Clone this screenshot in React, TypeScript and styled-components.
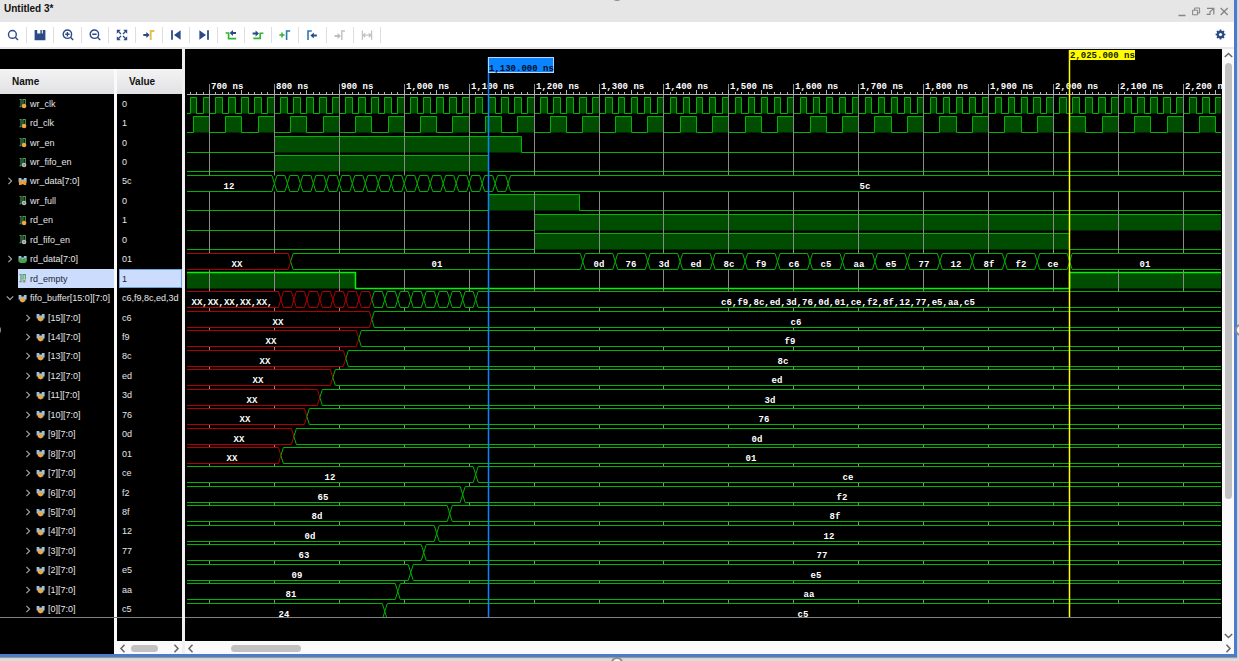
import React, { useLayoutEffect, useRef, useState } from 'react';
import styled, { createGlobalStyle, css } from 'styled-components';

const NAVY = '#2c4a86';
const GREEN = '#00b400';
const BRIGHT = '#00f400';
const RED = '#b00000';
const FILL = '#004c00';
const GRID = '#8a8a8a';

const GlobalStyle = createGlobalStyle`
  * { box-sizing: border-box; }
  body {
    margin: 0;
    background: #dcdcdc;
    font-family: "Liberation Sans", Arial, sans-serif;
    font-size: 10px;
    overflow: hidden;
  }
  button { font: inherit; }
`;

const Page = styled.div`
  position: relative;
  height: 100vh;
  padding: 0 2px 4px 0;
`;

const Frame = styled.main`
  display: flex;
  flex-direction: column;
  height: 100%;
  border: solid #4a7bcd;
  border-width: 0 3px 3px 0;
  background: #fff;
  box-shadow: 0 1px 1px #9a9a9a;
`;

const Handle = styled.span<{ $side: 'top' | 'bottom' | 'left' | 'right' }>`
  position: absolute;
  width: 12px;
  height: 12px;
  border: 2px solid #8c8c8c;
  border-radius: 50%;
  background: #fff;
  ${({ $side }) => $side === 'top' && css`top: -11px; left: calc(50% - 9px);`}
  ${({ $side }) => $side === 'bottom' && css`bottom: -8px; left: calc(50% - 9px);`}
  ${({ $side }) => $side === 'left' && css`left: -11px; top: calc(50% - 7px);`}
  ${({ $side }) => $side === 'right' && css`right: -8px; top: calc(50% - 7px);`}
`;

const TitleBar = styled.header`
  display: flex;
  flex: none;
  justify-content: space-between;
  height: 22px;
  padding: 0 3px 0 4px;
  background: #e6e6e6;
`;

const Title = styled.h1`
  margin: 0;
  font-size: 10px;
  line-height: 18px;
  color: #111;
`;

const WindowControls = styled.div`
  display: flex;
  align-items: flex-end;
  padding-bottom: 2px;
`;

const IconButton = styled.button`
  display: flex;
  align-items: center;
  justify-content: center;
  padding: 0;
  border: 0;
  background: none;
  color: inherit;
`;

const WindowButton = styled(IconButton)`
  width: 14px;
  height: 16px;
  color: #858585;
`;

const Toolbar = styled.nav`
  display: flex;
  flex: none;
  align-items: center;
  justify-content: space-between;
  height: 27px;
  padding-right: 6px;
  border-bottom: 2px solid #e9e9e9;
`;

const Tools = styled.div`
  display: grid;
  grid-template-columns: repeat(14, 1fr);
  width: 381px;
`;

const ToolButton = styled(IconButton)`
  height: 16px;
  border-right: 1px solid #dedede;
  color: ${NAVY};
`;

const Panes = styled.div`
  display: grid;
  flex: 1;
  grid-template-columns: 182px minmax(0, 1fr) 12px;
  grid-template-rows: minmax(0, 1fr) 13px;
  min-height: 0;
`;

const SignalPane = styled.section`
  display: flex;
  flex-direction: column;
  padding-top: 20px;
  background: #000;
  min-height: 0;
`;

const nameCell = css`
  border-right: 3px solid #fafafa;
`;

const SignalTable = styled.table`
  display: block;
  flex: 0 1 549px;
  min-height: 0;
  overflow: hidden;
  border-bottom: 1px solid #808080;
  color: #e6e6e6;
`;

const HeadRow = styled.tr`
  display: grid;
  grid-template-columns: 117px 65px;
  height: 25px;
`;

const HeadCell = styled.th<{ $first?: boolean }>`
  padding: 0 12px;
  background: linear-gradient(#f3f3f4, #e2e2e5);
  color: #111;
  line-height: 25px;
  text-align: left;
  ${({ $first }) => $first && nameCell}
`;

const TableHead = styled.thead`
  display: block;
`;

const TableBody = styled.tbody`
  display: grid;
  grid-template-rows: repeat(27, 1fr);
  height: 525px;
  font-size: 9px;
`;

const SignalRow = styled.tr`
  display: grid;
  grid-template-columns: 117px 65px;
`;

const NameCell = styled.td<{ $child?: boolean }>`
  display: flex;
  align-items: stretch;
  gap: 4px;
  min-width: 0;
  overflow: hidden;
  padding: 0 0 0 ${({ $child }) => ($child ? 24 : 6)}px;
  ${nameCell}
`;

const Expander = styled(IconButton)`
  flex: none;
  width: 8px;
  color: #a8a8a8;
`;

const ExpanderSpace = styled.span`
  flex: none;
  width: 8px;
`;

const SignalName = styled.span<{ $selected?: boolean }>`
  display: flex;
  flex: 1;
  align-items: center;
  gap: 3px;
  min-width: 0;
  white-space: nowrap;
  background: ${({ $selected }) => ($selected ? '#cbdcfd' : 'none')};
  color: ${({ $selected }) => ($selected ? '#1c2433' : 'inherit')};
  svg { flex: none; }
`;

const ValueCell = styled.td`
  display: flex;
  min-width: 0;
  padding: 0 0 0 2px;
  overflow: hidden;
`;

const SignalValue = styled.span<{ $selected?: boolean }>`
  display: flex;
  flex: 1;
  align-items: center;
  padding-left: 3px;
  white-space: nowrap;
  ${({ $selected }) =>
    $selected && css`
      background: #cbdcfd;
      color: #1c2433;
      box-shadow: inset 0 0 0 1px #6da3dc;
    `}
`;

const NameFiller = styled.div`
  flex: 1;
  width: 117px;
  ${nameCell}
`;

const WavePane = styled.section`
  min-height: 0;
  overflow: hidden;
  border-left: 3px solid #f0f0f0;
  background: #000;
`;

const WaveSvg = styled.svg`
  display: block;
  width: 100%;
  height: 100%;
  font: bold 9px "Liberation Mono", "Courier New", monospace;
`;

const SignalFooter = styled.div`
  display: grid;
  grid-template-columns: 117px 65px;
`;

const FooterBlank = styled.div`
  background: #000;
  ${nameCell}
`;

const ScrollBar = styled.div<{ $vertical?: boolean; $inset?: boolean; $wide?: boolean }>`
  display: flex;
  flex-direction: ${({ $vertical }) => ($vertical ? 'column' : 'row')};
  grid-column: ${({ $wide }) => ($wide ? 'span 2' : 'auto')};
  align-items: center;
  padding-top: ${({ $vertical }) => ($vertical ? 0 : 1)}px;
  background: #fafafa;
  border-left: ${({ $inset }) => ($inset ? '3px solid #f0f0f0' : '0')};
`;

const ScrollArrow = styled(IconButton)`
  flex: none;
  width: 12px;
  height: 12px;
  color: #666;
`;

const ScrollTrack = styled.div<{ $vertical?: boolean }>`
  display: flex;
  flex: 1;
  flex-direction: ${({ $vertical }) => ($vertical ? 'column' : 'row')};
  align-self: stretch;
  align-items: center;
`;

const Thumb = styled.span<{ $before: number; $size: number; $after: number; $vertical?: boolean }>`
  display: flex;
  flex: 1;
  flex-direction: ${({ $vertical }) => ($vertical ? 'column' : 'row')};
  align-self: stretch;
  align-items: center;
  &::before { content: ''; flex: ${({ $before }) => $before}; }
  &::after { content: ''; flex: ${({ $after }) => $after}; }
  i {
    flex: ${({ $size }) => $size};
    border-radius: 4px;
    background: #c1c1c1;
    ${({ $vertical }) => ($vertical ? 'width: 7px;' : 'height: 7px;')}
  }
`;

/* ---------- icons ---------- */

type Glyph = { label: string; draw: React.ReactNode };

const arrowRight = (x: number, y: number, c: string) => (
  <path d={`M${x} ${y - 1}h3v-2l3.4 3l-3.4 3v-2h-3z`} fill={c} stroke="none" />
);
const arrowLeft = (x: number, y: number, c: string) => (
  <path d={`M${x} ${y - 1}h-3v-2l-3.4 3l3.4 3v-2h3z`} fill={c} stroke="none" />
);

const tools: Glyph[] = [
  { label: 'Search', draw: <><circle cx="7.4" cy="7.4" r="3.9" /><path d="M10.3 10.3l2.7 2.7" /></> },
  { label: 'Save', draw: <path d="M2.6 3h2.6v3.4h3.2V3h1.4v3.4h1V3h2.6v10.2H2.6z" fill={NAVY} stroke="none" /> },
  { label: 'Zoom in', draw: <><circle cx="7.4" cy="7.2" r="4.2" /><path d="M10.5 10.3l2.7 2.7M5.2 7.2h4.4M7.4 5v4.4" /></> },
  { label: 'Zoom out', draw: <><circle cx="7.4" cy="7.2" r="4.2" /><path d="M10.5 10.3l2.7 2.7M5.2 7.2h4.4" /></> },
  { label: 'Zoom fit', draw: <><path d="M4 4l3 3M12 4l-3 3M4 12l3-3M12 12l-3-3" strokeWidth="1.3" /><path d="M2.8 2.8h4L2.8 6.8zM13.2 2.8h-4l4 4zM2.8 13.2h4l-4-4zM13.2 13.2h-4l4-4z" fill={NAVY} stroke="none" /></> },
  { label: 'Go to cursor', draw: <>{arrowRight(2.3, 8, NAVY)}<path d="M9.7 13V4h3.6" stroke="#e2c04c" strokeWidth="1.9" /></> },
  { label: 'Go to start', draw: <><path d="M4 3.2v9.6" strokeWidth="1.8" /><path d="M12.6 3.2v9.6L6 8z" fill={NAVY} stroke="none" /></> },
  { label: 'Go to end', draw: <><path d="M12 3.2v9.6" strokeWidth="1.8" /><path d="M3.4 3.2v9.6L10 8z" fill={NAVY} stroke="none" /></> },
  { label: 'Previous transition', draw: <><path d="M2.6 6h3v5.6h7.6" stroke="#2fb52f" strokeWidth="1.6" />{arrowLeft(13, 6, NAVY)}</> },
  { label: 'Next transition', draw: <><path d="M3.4 11.4h6.8V6.2h3.2" stroke="#2fb52f" strokeWidth="1.6" />{arrowRight(2.6, 6.6, NAVY)}</> },
  { label: 'Add marker', draw: <><path d="M2.4 8h5.2M5 5.4v5.2" stroke="#2fb52f" strokeWidth="1.5" /><path d="M9.6 13V4h3.6" stroke="#2a7ab8" strokeWidth="1.6" /></> },
  { label: 'Previous marker', draw: <><path d="M4 13V4h3.8" stroke="#2a7ab8" strokeWidth="1.6" />{arrowLeft(12.8, 8.6, NAVY)}</> },
  { label: 'Next marker', draw: <>{arrowRight(2.6, 9, '#bdbdbd')}<path d="M9.8 13V4h3.2" stroke="#c4c4c4" strokeWidth="1.5" /></> },
  { label: 'Swap cursors', draw: <path d="M3.4 3.4v9.4M12.6 3.4v9.4M4.4 8.2h7.2M6.2 6.2l-2 2l2 2M9.8 6.2l2 2l-2 2" stroke="#c4c4c4" strokeWidth="1.3" /> },
];

const windowButtons: Glyph[] = [
  { label: 'Minimize', draw: <path d="M1.5 9.5h7" strokeWidth="1.5" /> },
  { label: 'Restore', draw: <path d="M3.6 4.2V2h5v5H6.6M1.6 4.2h5v4.6h-5z" /> },
  { label: 'Float', draw: <path d="M2 2.4h6.8v6.2M8.8 2.4L4.4 6.4M1.6 8.4h3.4V5.4" strokeWidth="1.2" /> },
  { label: 'Close', draw: <path d="M1.7 2l7 7M8.7 2l-7 7" strokeWidth="1.3" /> },
];

const Chevron = ({ dir }: { dir: 'left' | 'right' | 'up' | 'down' }) => {
  const d = {
    left: 'M5.5 0.8L2 4.5l3.5 3.7',
    right: 'M2.5 0.8L6 4.5L2.5 8.2',
    up: 'M0.8 6L4.5 2.5L8.2 6',
    down: 'M0.8 3L4.5 6.5L8.2 3',
  }[dir];
  return (
    <svg width="9" height="9" viewBox="0 0 9 9" fill="none" stroke="currentColor" strokeWidth="1.5"><path d={d} /></svg>
  );
};

const TreeArrow = ({ open }: { open?: boolean }) => (
  <svg width="8" height="8" viewBox="0 0 8 8" fill="none" stroke="currentColor" strokeWidth="1.1">
    <path d={open ? 'M0.8 2.4L4 5.6l3.2-3.2' : 'M2.4 0.8L5.6 4L2.4 7.2'} />
  </svg>
);

type Kind = 'in' | 'wire' | 'busIn' | 'busOut' | 'bus';

const SignalIcon = ({ kind }: { kind: Kind }) => {
  if (kind === 'in' || kind === 'wire') {
    return (
      <svg width="9" height="11" viewBox="0 0 9 11" fill="none">
        <path d="M1.6 1.5H3v7.2H1.4M5 7V1.5h2.3v5" stroke="#4a9a5c" strokeWidth="1.1" />
        <circle cx="6.1" cy="8" r="2.3" fill={kind === 'in' ? '#f3a640' : '#b9bdbb'} />
        {kind === 'wire' && <circle cx="6.1" cy="8" r="0.7" fill="#555" />}
      </svg>
    );
  }
  return (
    <svg width="9" height="11" viewBox="0 0 9 11">
      <path d="M0.6 2h2.8v1.6h2.4V2h2.8v4.6H7.4v1.6H1.8V6.6H0.6z" fill="#9cc3dc" />
      {kind === 'bus' && <circle cx="4.6" cy="7" r="2.4" fill="#f3a640" />}
      {kind === 'busIn' && <path d="M1 4.4h2.8l.8 1l.8-1h2.8V9H5.6V7.4h-2V9H1z" fill="#ee9a2e" />}
      {kind === 'busOut' && <path d="M0.6 5l1.8-1.2L4.6 5l2.2-1.2L8.6 5v3L6.2 9H3L.6 8z" fill="#46a450" />}
    </svg>
  );
};

/* ---------- waveform data ---------- */

type Seg = { from: number; to: number; text?: string; red?: boolean };
type Signal = {
  name: string;
  value: string;
  kind: Kind;
  child?: boolean;
  open?: boolean;
  high?: [number, number][];
  segs?: Seg[];
};

const START = 400;
const END = 9999;

const pulses = (period: number, from: number, to: number): [number, number][] => {
  const out: [number, number][] = [];
  for (let t = from; t < to; t += period) out.push([t + period / 2, t + period]);
  return out;
};

const steps = (from: number, to: number, step: number, redUntil = 0): Seg[] => {
  const out: Seg[] = [];
  for (let t = from; t < to; t += step) out.push({ from: t, to: t + step, red: t < redUntil });
  return out;
};

const reads = ['0d', '76', '3d', 'ed', '8c', 'f9', 'c6', 'c5', 'aa', 'e5', '77', '12', '8f', 'f2', 'ce'];

const memory: [string, string][] = [
  ['XX', 'c6'], ['XX', 'f9'], ['XX', '8c'], ['XX', 'ed'], ['XX', '3d'], ['XX', '76'], ['XX', '0d'], ['XX', '01'],
  ['12', 'ce'], ['65', 'f2'], ['8d', '8f'], ['0d', '12'], ['63', '77'], ['09', 'e5'], ['81', 'aa'], ['24', 'c5'],
];

const signals: Signal[] = [
  { name: 'wr_clk', value: '0', kind: 'in', high: pulses(20, 640, 3000) },
  { name: 'rd_clk', value: '1', kind: 'in', high: pulses(50, 650, 3000) },
  { name: 'wr_en', value: '0', kind: 'in', high: [[800, 1180]] },
  { name: 'wr_fifo_en', value: '0', kind: 'wire', high: [[800, 1130]] },
  {
    name: 'wr_data[7:0]', value: '5c', kind: 'busIn',
    segs: [{ from: START, to: 800, text: '12' }, ...steps(800, 1160, 20), { from: 1160, to: END, text: '5c' }],
  },
  { name: 'wr_full', value: '0', kind: 'wire', high: [[1130, 1270]] },
  { name: 'rd_en', value: '1', kind: 'in', high: [[1200, END]] },
  { name: 'rd_fifo_en', value: '0', kind: 'wire', high: [[1200, 2025]] },
  {
    name: 'rd_data[7:0]', value: '01', kind: 'busOut',
    segs: [
      { from: START, to: 825, text: 'XX', red: true },
      { from: 825, to: 1275, text: '01' },
      ...reads.map((text, i) => ({ from: 1275 + i * 50, to: 1325 + i * 50, text })),
      { from: 2025, to: END, text: '01' },
    ],
  },
  { name: 'rd_empty', value: '1', kind: 'wire', high: [[START, 925], [2025, END]] },
  {
    name: 'fifo_buffer[15:0][7:0]', value: 'c6,f9,8c,ed,3d', kind: 'bus', open: true,
    segs: [
      { from: START, to: 810, text: 'XX,XX,XX,XX,XX,', red: true },
      ...steps(810, 1110, 20, 950),
      { from: 1110, to: END, text: 'c6,f9,8c,ed,3d,76,0d,01,ce,f2,8f,12,77,e5,aa,c5' },
    ],
  },
  ...memory.map(([before, after], i): Signal => {
    const at = i < 8 ? 950 - i * 20 : 1110 - (i - 8) * 20;
    return {
      name: `[${15 - i}][7:0]`, value: after, kind: 'bus', child: true,
      segs: [{ from: START, to: at, text: before, red: i < 8 }, { from: at, to: END, text: after }],
    };
  }),
];

const SELECTED = 'rd_empty';

/* ---------- waveform drawing ---------- */

const LEFT = 2;
const RULER_Y = 45;
const BOTTOM = 568;
const LEVEL = 16;
const timeX = (t: number) => 24.5 + (t - 700) * 0.6492;
const snap = (t: number) => Math.floor(timeX(t)) + 0.5;
const rowTop = (i: number) => Math.round(48 + (i * 525) / 27) + 0.5;

const Digital = ({ index, high, right, bright }: { index: number; high: [number, number][]; right: number; bright: boolean }) => {
  const top = rowTop(index);
  const low = top + LEVEL;
  const spans = high
    .map(([a, b]) => [Math.max(snap(a), LEFT - 4), Math.min(snap(b), right + 4)])
    .filter(([a, b]) => b > LEFT && a < right);
  let d = `M${LEFT - 6} ${low}`;
  spans.forEach(([a, b]) => {
    d += `H${a}V${top}H${b}V${low}`;
  });
  d += `H${right + 6}`;
  return (
    <>
      {spans.map(([a, b]) => (
        <rect key={a} x={a} y={top} width={b - a} height={LEVEL} fill={FILL} />
      ))}
      <path d={d} fill="none" stroke={bright ? BRIGHT : GREEN} strokeWidth={bright ? 1.5 : 1} />
    </>
  );
};

const Bus = ({ index, segs, right }: { index: number; segs: Seg[]; right: number }) => {
  const top = rowTop(index);
  const low = top + LEVEL;
  const mid = top + LEVEL / 2;
  return (
    <>
      <rect x={LEFT} y={top} width={right - LEFT} height={LEVEL} fill="#000" />
      {segs.map((s) => {
        const a = s.from === START ? LEFT - 10 : timeX(s.from);
        const b = s.to === END ? right + 10 : timeX(s.to);
        const side = (y: number) => `M${a} ${mid}L${a + 2.5} ${y}H${b - 2.5}L${b} ${mid}`;
        return <path key={s.from} d={side(top) + side(low)} fill="none" stroke={s.red ? RED : GREEN} />;
      })}
      {segs.filter((s) => s.text).map((s) => {
        const a = s.from === START ? -1 : timeX(s.from);
        const b = s.to === END ? right : timeX(s.to);
        return (
          <text key={s.from} x={Math.round((a + b) / 2)} y={Math.floor(top) + 14} textAnchor="middle" fill="#fff">
            {s.text}
          </text>
        );
      })}
    </>
  );
};

const Waveform = () => {
  const ref = useRef<SVGSVGElement>(null);
  const [width, setWidth] = useState(1038);
  useLayoutEffect(() => {
    const node = ref.current;
    if (!node) return undefined;
    const update = () => setWidth(node.getBoundingClientRect().width);
    update();
    const observer = new ResizeObserver(update);
    observer.observe(node);
    return () => observer.disconnect();
  }, []);

  const right = width - 1;
  const ticks: number[] = [];
  for (let t = 670; timeX(t) < right; t += 10) ticks.push(t);
  const majors = ticks.filter((t) => t % 100 === 0);

  return (
    <WaveSvg ref={ref} role="img" aria-label="Waveforms">
      <defs>
        <clipPath id="tracks"><rect x={LEFT} y="0" width={right - LEFT} height={BOTTOM} /></clipPath>
      </defs>
      <g clipPath="url(#tracks)">
        {signals.map((s, i) => s.high && (
          <Digital key={s.name} index={i} high={s.high} right={right} bright={s.name === SELECTED} />
        ))}
        {majors.map((t) => (
          <path key={t} d={`M${snap(t)} 35V${BOTTOM}`} stroke={GRID} />
        ))}
        {ticks.map((t) => (
          <path key={t} d={`M${snap(t)} ${t % 50 === 0 ? 41 : 43}V46`} stroke="#b8b8b8" />
        ))}
        <path d={`M${LEFT} ${RULER_Y + 0.5}H${right}`} stroke="#b0b0b0" />
        {signals.map((s, i) => s.segs && <Bus key={s.name} index={i} segs={s.segs} right={right} />)}
      </g>
      {majors.map((t) => (
        <text key={t} x={Math.floor(timeX(t)) + 2} y="40" fill="#fff">{t.toLocaleString('en-US')} ns</text>
      ))}
      <path d={`M0 ${BOTTOM + 0.5}H${right}`} stroke="#808080" />
      <path d={`M${snap(1130)} 8V${BOTTOM}`} stroke="#0a84ff" strokeWidth="1.5" />
      <rect x="303.5" y="8.5" width="65" height="15" fill="#0a84ff" stroke="#b5d6fb" />
      <text x="304" y="22" fill="#000c1c">1,130.000 ns</text>
      <path d={`M${snap(2025)} 1V${BOTTOM}`} stroke="#ffff00" strokeWidth="1.5" />
      <rect x="884" y="1" width="66" height="10" fill="#ffff00" />
      <text x="885" y="9" fill="#222200">2,025.000 ns</text>
    </WaveSvg>
  );
};

export default function App() {
  return (
    <Page>
      <GlobalStyle />
      <Frame>
        <TitleBar>
          <Title>Untitled 3*</Title>
          <WindowControls>
            {windowButtons.map((b) => (
              <WindowButton key={b.label} aria-label={b.label}>
                <svg width="11" height="12" viewBox="0 0 11 12" fill="none" stroke="currentColor">{b.draw}</svg>
              </WindowButton>
            ))}
          </WindowControls>
        </TitleBar>
        <Toolbar>
          <Tools>
            {tools.map((t) => (
              <ToolButton key={t.label} aria-label={t.label}>
                <svg width="16" height="16" viewBox="0 0 16 16" fill="none" stroke="currentColor" strokeWidth="1.4">{t.draw}</svg>
              </ToolButton>
            ))}
          </Tools>
          <IconButton aria-label="Settings">
            <svg width="16" height="16" viewBox="0 0 16 16" fill="none" stroke={NAVY}>
              <circle cx="8.5" cy="7.5" r="2.8" strokeWidth="2.2" />
              <path d="M8.5 2.6v9.8M3.6 7.5h9.8M5 4l7 7M12 4l-7 7" strokeWidth="1.7" />
              <circle cx="8.5" cy="7.5" r="1.6" fill="#fff" stroke="none" />
            </svg>
          </IconButton>
        </Toolbar>
        <Panes>
          <SignalPane>
            <SignalTable>
              <TableHead>
                <HeadRow>
                  <HeadCell $first>Name</HeadCell>
                  <HeadCell>Value</HeadCell>
                </HeadRow>
              </TableHead>
              <TableBody>
                {signals.map((s) => (
                  <SignalRow key={s.name}>
                    <NameCell $child={s.child}>
                      {s.segs ? (
                        <Expander aria-label={`Expand ${s.name}`}><TreeArrow open={s.open} /></Expander>
                      ) : (
                        <ExpanderSpace />
                      )}
                      <SignalName $selected={s.name === SELECTED}>
                        <SignalIcon kind={s.kind} />
                        {s.name}
                      </SignalName>
                    </NameCell>
                    <ValueCell>
                      <SignalValue $selected={s.name === SELECTED}>{s.value}</SignalValue>
                    </ValueCell>
                  </SignalRow>
                ))}
              </TableBody>
            </SignalTable>
            <NameFiller />
          </SignalPane>
          <WavePane>
            <Waveform />
          </WavePane>
          <ScrollBar $vertical>
            <ScrollArrow aria-label="Scroll up"><Chevron dir="up" /></ScrollArrow>
            <ScrollTrack $vertical>
              <Thumb $vertical $before={2} $size={437} $after={130}><i /></Thumb>
            </ScrollTrack>
            <ScrollArrow aria-label="Scroll down"><Chevron dir="down" /></ScrollArrow>
          </ScrollBar>
          <SignalFooter>
            <FooterBlank />
            <ScrollBar>
              <ScrollArrow aria-label="Scroll values left"><Chevron dir="left" /></ScrollArrow>
              <ScrollTrack>
                <Thumb $before={2} $size={27} $after={12}><i /></Thumb>
              </ScrollTrack>
              <ScrollArrow aria-label="Scroll values right"><Chevron dir="right" /></ScrollArrow>
            </ScrollBar>
          </SignalFooter>
          <ScrollBar $inset $wide>
            <ScrollArrow aria-label="Scroll waves left"><Chevron dir="left" /></ScrollArrow>
            <ScrollTrack>
              <Thumb $before={34} $size={70} $after={921}><i /></Thumb>
            </ScrollTrack>
            <ScrollArrow aria-label="Scroll waves right"><Chevron dir="right" /></ScrollArrow>
          </ScrollBar>
        </Panes>
      </Frame>
      <Handle $side="top" />
      <Handle $side="bottom" />
      <Handle $side="left" />
      <Handle $side="right" />
    </Page>
  );
}
